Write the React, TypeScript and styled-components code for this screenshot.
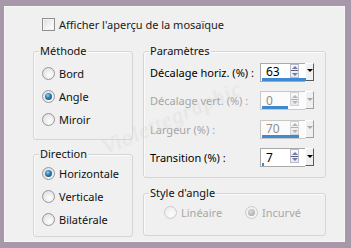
import React from "react";
import styled, { createGlobalStyle, css } from "styled-components";

const Global = createGlobalStyle`
  html, body {
    margin: 0;
    padding: 0;
    background: #a698a9;
  }
  body {
    font-family: "Noto Sans", "Open Sans", sans-serif;
    font-size: 11px;
    color: #1a1a1a;
  }
`;

const Panel = styled.div`
  position: relative;
  box-sizing: border-box;
  width: 341px;
  height: 236px;
  margin: 6px 0 0 4px;
  background: #f0f0f0;
  border: 1px solid #f7f6f7;
  overflow: hidden;
`;

const CheckRow = styled.label`
  display: flex;
  align-items: center;
  gap: 4px;
  margin: 11px 0 0 37px;
  height: 13px;
  line-height: 13px;
`;

const CheckBox = styled.span`
  box-sizing: border-box;
  width: 13px;
  height: 13px;
  border: 1px solid #8e8f8f;
  background: linear-gradient(135deg, #dcdcdc 0%, #f4f4f4 60%, #ffffff 100%);
  box-shadow: inset 0 0 0 1px #f4f4f4;
`;

const Columns = styled.div`
  display: grid;
  grid-template-columns: 100px 183px;
  column-gap: 10px;
  margin: 20px 0 0 28px;
`;

const Column = styled.div<{ $gap: number }>`
  display: flex;
  flex-direction: column;
  gap: ${(p) => p.$gap}px;
`;

const Group = styled.div<{ $h: number }>`
  box-sizing: border-box;
  height: ${(p) => p.$h}px;
  border: 1px solid #d5d5d5;
  border-radius: 3px;
  box-shadow: inset 1px 1px 0 #fbfbfb;
`;

const Title = styled.div`
  width: fit-content;
  margin: -9px 0 0 5px;
  padding: 0 1px;
  line-height: 16px;
  height: 16px;
  background: #f0f0f0;
  color: #111;
`;

const RadioList = styled.div<{ $top: number }>`
  display: flex;
  flex-direction: column;
  padding: ${(p) => p.$top}px 0 0 8px;
`;

const RadioRow = styled.div<{ $disabled?: boolean; $w?: number }>`
  display: flex;
  align-items: center;
  gap: 4px;
  height: 23px;
  color: ${(p) => (p.$disabled ? "#a8a8a8" : "#111")};
  ${(p) => p.$w && css`width: ${p.$w}px;`}
`;

const Circle = styled.span<{ $checked?: boolean; $disabled?: boolean }>`
  box-sizing: border-box;
  position: relative;
  flex-shrink: 0;
  width: 13px;
  height: 13px;
  border-radius: 50%;
  border: 1px solid ${(p) => (p.$disabled ? "#cbcbcb" : "#979797")};
  background: ${(p) =>
    p.$disabled
      ? "radial-gradient(circle at 60% 65%, #fbfbfb 0%, #efefef 70%)"
      : "radial-gradient(circle at 60% 65%, #ffffff 0%, #e2e2e2 75%)"};
  ${(p) =>
    p.$checked &&
    css`
      &::after {
        content: "";
        position: absolute;
        left: 2px;
        top: 2px;
        width: 7px;
        height: 7px;
        border-radius: 50%;
        background: ${p.$disabled
          ? "radial-gradient(circle at 40% 35%, #dcdcdc 0%, #ababab 80%)"
          : "radial-gradient(circle at 40% 35%, #8fd0f5 0%, #2b78ad 45%, #10446e 100%)"};
      }
    `}
`;

const Rows = styled.div`
  display: flex;
  flex-direction: column;
  margin-top: -1px;
`;

const ParamRow = styled.div<{ $disabled?: boolean }>`
  display: flex;
  align-items: center;
  height: 28.5px;
  padding-left: 6px;
  color: ${(p) => (p.$disabled ? "#a5a5a5" : "#000")};
`;

const ParamLabel = styled.span`
  flex: 0 0 110px;
  white-space: nowrap;
`;

const Spin = styled.div`
  display: flex;
  flex: 0 0 54px;
  height: 19px;
`;

const Field = styled.div<{ $disabled?: boolean }>`
  position: relative;
  box-sizing: border-box;
  flex: 1;
  display: flex;
  align-items: center;
  padding: 0 0 1px 5px;
  background: ${(p) => (p.$disabled ? "#fbfbfb" : "#ffffff")};
  border: 1px solid ${(p) => (p.$disabled ? "#c8c8c8" : "#a9a9a9")};
  border-right: none;
  color: ${(p) => (p.$disabled ? "#8d8d8d" : "#000")};
  font-size: 12px;
`;

const Bar = styled.span`
  position: absolute;
  left: 1px;
  bottom: 0;
  height: 3px;
  background: #3d8ad0;
`;

const Arrows = styled.span<{ $disabled?: boolean }>`
  box-sizing: border-box;
  display: flex;
  flex-direction: column;
  margin: 0 6px 2px auto;
  width: 9px;
  height: 14px;
  border: 1px solid ${(p) => (p.$disabled ? "#d3d3d3" : "#b9bccb")};
  background: linear-gradient(#fafafa, #e8e8ee);
`;

const Tri = styled.span<{ $down?: boolean; $color: string; $line: string }>`
  flex: 1;
  display: flex;
  align-items: center;
  justify-content: center;
  ${(p) => p.$down && css`border-top: 1px solid ${p.$line};`}
  &::before {
    content: "";
    width: 0;
    height: 0;
    border-left: 3px solid transparent;
    border-right: 3px solid transparent;
    ${(p) =>
      p.$down
        ? css`border-top: 3px solid ${p.$color};`
        : css`border-bottom: 3px solid ${p.$color};`}
  }
`;

const Drop = styled.span<{ $disabled?: boolean }>`
  box-sizing: border-box;
  display: flex;
  align-items: center;
  justify-content: center;
  width: 9px;
  height: 18px;
  background: #f0f0f0;
  border-top: 1px solid #ffffff;
  border-left: 1px solid #ffffff;
  border-right: 1px solid ${(p) => (p.$disabled ? "#a0a0a0" : "#5a5a5a")};
  border-bottom: 1px solid ${(p) => (p.$disabled ? "#a0a0a0" : "#5a5a5a")};
  &::before {
    content: "";
    border-left: 3px solid transparent;
    border-right: 3px solid transparent;
    border-top: 3px solid ${(p) => (p.$disabled ? "#a7a7a7" : "#000")};
    margin-bottom: 2px;
  }
`;

const StyleRow = styled.div`
  display: flex;
  padding: 0 0 0 20px;
  margin-top: 1px;
`;

const Watermark = styled.div`
  position: absolute;
  left: 92px;
  top: 98px;
  transform: rotate(-24deg);
  font-family: "Liberation Serif", serif;
  font-style: italic;
  font-size: 22px;
  letter-spacing: 1px;
  color: rgba(255, 255, 255, 0.25);
  text-shadow: 0 0 1px rgba(140, 140, 140, 0.18);
  pointer-events: none;
`;

type Param = { label: string; value: string; bar: number; disabled?: boolean };

const params: Param[] = [
  { label: "Décalage horiz. (%) :", value: "63", bar: 44 },
  { label: "Décalage vert. (%) :", value: "0", bar: 26, disabled: true },
  { label: "Largeur (%) :", value: "70", bar: 37, disabled: true },
  { label: "Transition (%) :", value: "7", bar: 2 },
];

function Radio({
  label,
  checked,
  disabled,
  width,
  height,
}: {
  label: string;
  checked?: boolean;
  disabled?: boolean;
  width?: number;
  height?: number;
}) {
  return (
    <RadioRow $disabled={disabled} $w={width} style={height ? { height } : undefined}>
      <Circle $checked={checked} $disabled={disabled} />
      <span>{label}</span>
    </RadioRow>
  );
}

function SpinBox({ p }: { p: Param }) {
  const arrow = p.disabled ? "#b4b4bd" : "#6f78b4";
  const line = p.disabled ? "#b0b0b0" : "#5f6170";
  return (
    <Spin>
      <Field $disabled={p.disabled}>
        {p.value}
        <Arrows $disabled={p.disabled}>
          <Tri $color={arrow} $line={line} />
          <Tri $down $color={arrow} $line={line} />
        </Arrows>
        <Bar style={{ width: p.bar }} />
      </Field>
      <Drop $disabled={p.disabled} />
    </Spin>
  );
}

export default function App() {
  return (
    <>
      <Global />
      <Panel>
        <CheckRow>
          <CheckBox />
          <span>Afficher l'aperçu de la mosaïque</span>
        </CheckRow>
        <Columns>
          <Column $gap={14}>
            <Group $h={89}>
              <Title>Méthode</Title>
              <RadioList $top={3}>
                <Radio label="Bord" />
                <Radio label="Angle" checked />
                <Radio label="Miroir" />
              </RadioList>
            </Group>
            <Group $h={83}>
              <Title>Direction</Title>
              <RadioList $top={0}>
                <Radio label="Horizontale" checked />
                <Radio label="Verticale" />
                <Radio label="Bilatérale" />
              </RadioList>
            </Group>
          </Column>
          <Column $gap={15}>
            <Group $h={127}>
              <Title>Paramètres</Title>
              <Rows>
                {params.map((p) => (
                  <ParamRow key={p.label} $disabled={p.disabled}>
                    <ParamLabel>{p.label}</ParamLabel>
                    <SpinBox p={p} />
                  </ParamRow>
                ))}
              </Rows>
            </Group>
            <Group $h={43}>
              <Title>Style d'angle</Title>
              <StyleRow>
                <Radio label="Linéaire" disabled width={81} height={20} />
                <Radio label="Incurvé" disabled checked height={20} />
              </StyleRow>
            </Group>
          </Column>
        </Columns>
        <Watermark>Violettegraphic</Watermark>
      </Panel>
    </>
  );
}
